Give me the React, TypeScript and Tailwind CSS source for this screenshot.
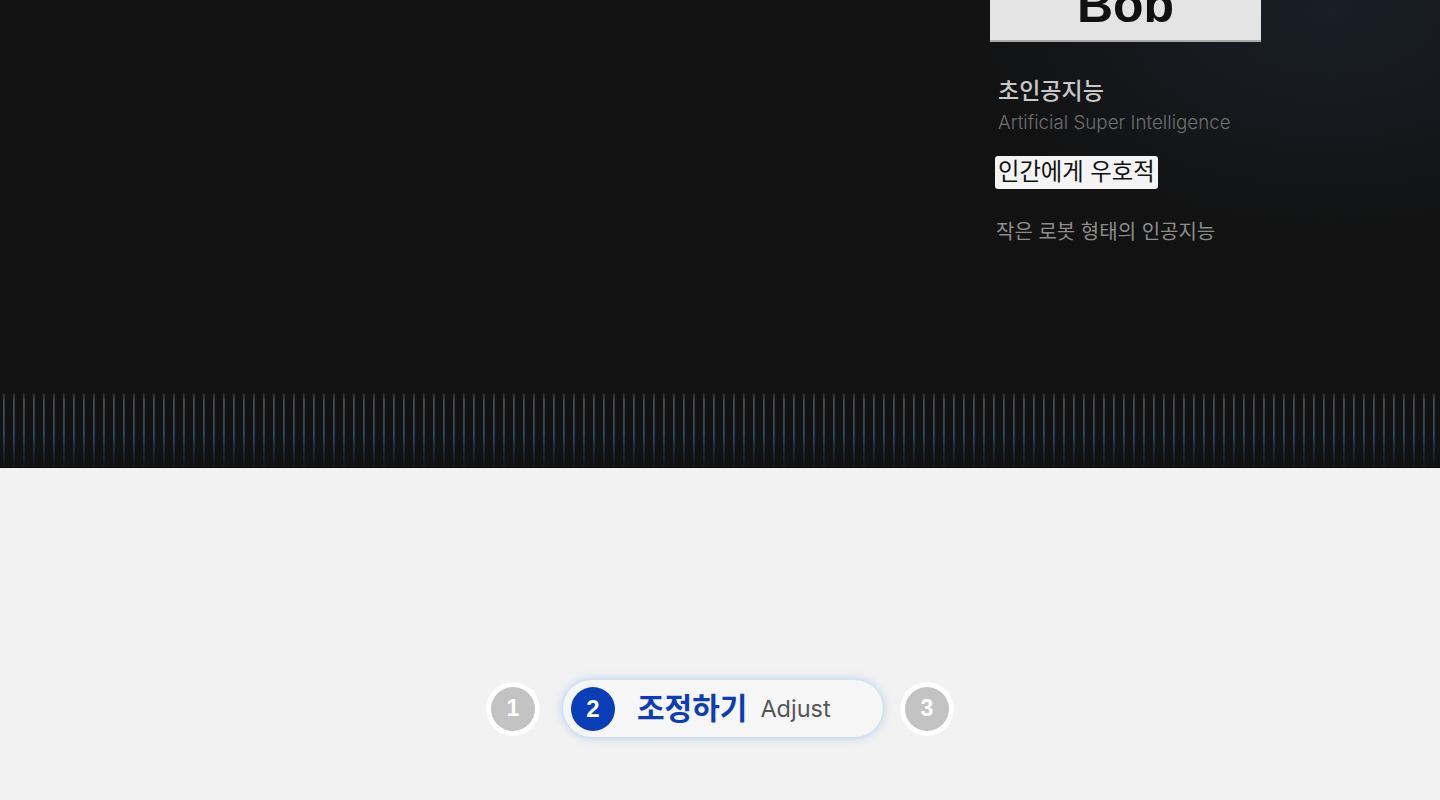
import React from 'react';

const stripeCount = 144;

function Stripes() {
  return (
    <svg width="1440" height="74" viewBox="0 0 1440 74" className="block">
      <defs>
        <linearGradient id="line" x1="0" y1="0" x2="0" y2="74" gradientUnits="userSpaceOnUse">
          <stop offset="0" stopColor="#242424" />
          <stop offset="0.1" stopColor="#4c4c4c" />
          <stop offset="0.35" stopColor="#3c4650" />
          <stop offset="0.55" stopColor="#2a4a68" />
          <stop offset="0.8" stopColor="#1c2a38" />
          <stop offset="1" stopColor="#161616" />
        </linearGradient>
      </defs>
      {Array.from({ length: stripeCount }).map((_, i) => (
        <rect key={i} x={3 + i * 10} y={0} width={1.8} height={74} fill="url(#line)" />
      ))}
    </svg>
  );
}

function Dot({ n }: { n: number }) {
  return (
    <div className="flex h-[54px] w-[54px] items-center justify-center rounded-full bg-white">
      <div className="flex h-[44px] w-[44px] items-center justify-center rounded-full bg-[#c3c3c3] text-[23px] font-bold text-white [font-family:'Liberation_Sans',sans-serif]">
        {n}
      </div>
    </div>
  );
}

export default function App() {
  return (
    <div className="w-[1440px] h-[800px] overflow-hidden [font-family:Inter,'Noto_Sans_CJK_KR',sans-serif]">
      <section className="relative h-[468px] bg-[#121212] bg-[radial-gradient(ellipse_380px_230px_at_1330px_10px,#191e27,transparent)] flex flex-col">
        <div className="flex-1 pl-[990px]">
          <div className="h-[42px] w-[271px] overflow-hidden bg-[#e4e4e4] border-b-2 border-[#a9a9a9]">
            <div className="-mt-[20px] text-center text-[50px] leading-none font-bold text-[#111] [font-family:'Liberation_Sans',sans-serif]">
              Bob
            </div>
          </div>
          <div className="pl-[8px] pt-[34px] text-[23px] leading-[30px] font-medium text-[#c9c9c9]">
            초인공지능
          </div>
          <div className="pl-[8px] pt-[4px] text-[18.8px] leading-[26px] font-light text-[#6f6f6f]">
            Artificial Super Intelligence
          </div>
          <div className="mt-[20px] ml-[5px] inline-flex h-[33px] items-center rounded-[3px] bg-[#f4f4f4] px-[3px] text-[23.3px] text-[#111]">
            인간에게 우호적
          </div>
          <div className="pl-[6px] pt-[28px] text-[20px] text-[#8c8c8c]">
            작은 로봇 형태의 인공지능
          </div>
        </div>
        <Stripes />
        <div className="h-[1px] bg-[#0c0c0c]" />
      </section>
      <section className="h-[332px] bg-[#f2f2f2] flex items-start justify-center pt-[211px]">
        <div className="flex items-center">
          <Dot n={1} />
          <div className="ml-[22px] flex h-[59px] w-[322px] items-center rounded-full border border-[#cddff5] bg-[#f6f6f7] pl-[8px] shadow-[0_0_10px_rgba(90,150,230,0.35)]">
            <div className="flex h-[44px] w-[44px] items-center justify-center rounded-full bg-[#0a3db8] text-[24px] font-bold text-white [font-family:'Liberation_Sans',sans-serif]">
              2
            </div>
            <span className="ml-[22px] text-[30px] font-bold text-[#0d3db6]">조정하기</span>
            <span className="ml-[13px] text-[23.5px] text-[#555]">Adjust</span>
          </div>
          <div className="ml-[16px]">
            <Dot n={3} />
          </div>
        </div>
      </section>
    </div>
  );
}
